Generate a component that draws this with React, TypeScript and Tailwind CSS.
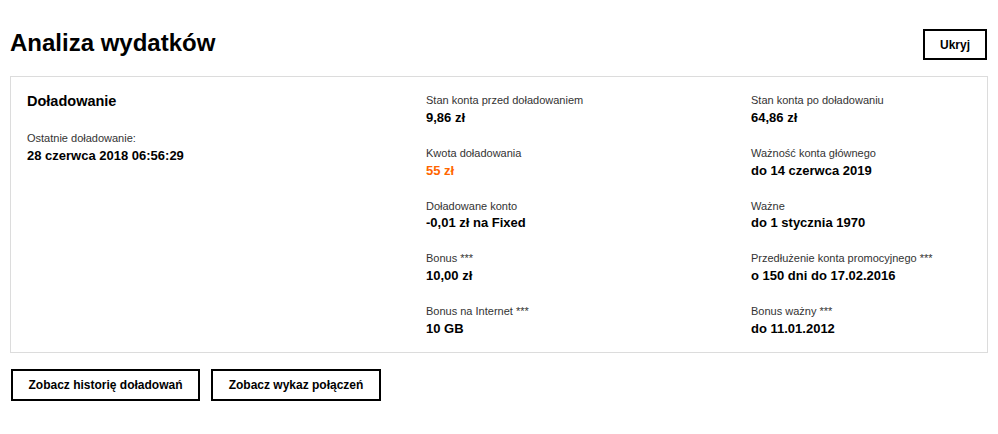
const font = "font-['Liberation_Sans',Arial,sans-serif]";

type Item = { label: string; value: string; accent?: boolean };

const middle: Item[] = [
  { label: "Stan konta przed doładowaniem", value: "9,86 zł" },
  { label: "Kwota doładowania", value: "55 zł", accent: true },
  { label: "Doładowane konto", value: "-0,01 zł na Fixed" },
  { label: "Bonus ***", value: "10,00 zł" },
  { label: "Bonus na Internet ***", value: "10 GB" },
];

const right: Item[] = [
  { label: "Stan konta po doładowaniu", value: "64,86 zł" },
  { label: "Ważność konta głównego", value: "do 14 czerwca 2019" },
  { label: "Ważne", value: "do 1 stycznia 1970" },
  { label: "Przedłużenie konta promocyjnego ***", value: "o 150 dni do 17.02.2016" },
  { label: "Bonus ważny ***", value: "do 11.01.2012" },
];

function Field({ item }: { item: Item }) {
  return (
    <div className="mb-[18px] last:mb-0">
      <div className="text-[11px] leading-[16px] text-[#333]">{item.label}</div>
      <div
        className={`mt-[0.75px] text-[13px] font-bold leading-[18px] ${item.accent ? "text-[#ff6600]" : "text-black"}`}
      >
        {item.value}
      </div>
    </div>
  );
}

export default function App() {
  return (
    <div className={`${font} bg-white px-[10px] pt-[29px] text-black`}>
      <div className="flex items-start justify-between">
        <h1 className="text-[24px] font-bold leading-[27px]">Analiza wydatków</h1>
        <button
          type="button"
          className="mr-[1px] h-[31px] w-[64px] border-2 border-black text-[12px] font-bold"
        >
          Ukryj
        </button>
      </div>

      <div className="mt-[16px] border border-[#dcdcdc] pb-[14px] pl-[16px] pt-[15px]">
        <div className="grid grid-cols-[399px_325px_1fr]">
          <div>
            <h2 className="text-[14.5px] font-bold leading-[18px]">Doładowanie</h2>
            <div className="mt-[20px] text-[11px] leading-[16px] text-[#333]">Ostatnie doładowanie:</div>
            <div className="mt-[1px] text-[13px] font-bold leading-[18px]">28 czerwca 2018 06:56:29</div>
          </div>
          <div>
            {middle.map((item) => (
              <Field key={item.label} item={item} />
            ))}
          </div>
          <div>
            {right.map((item) => (
              <Field key={item.label} item={item} />
            ))}
          </div>
        </div>
      </div>

      <div className="mt-[16px] flex gap-[11px] pl-[1px]">
        <button type="button" className="h-[32px] w-[189px] border-2 border-black text-[12px] font-bold">
          Zobacz historię doładowań
        </button>
        <button type="button" className="h-[32px] w-[170px] border-2 border-black text-[12px] font-bold">
          Zobacz wykaz połączeń
        </button>
      </div>
    </div>
  );
}
